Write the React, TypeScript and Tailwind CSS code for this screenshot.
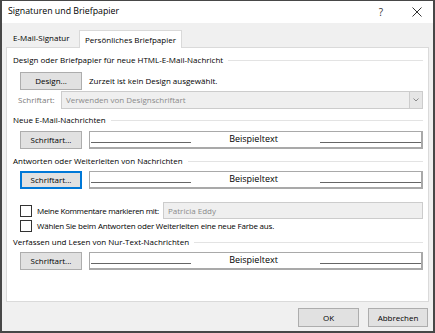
import React from "react";

function Header({ title }: { title: string }) {
  return (
    <div className="h-[14px] flex items-center gap-[5px]">
      <span className="whitespace-nowrap">{title}</span>
      <div className="flex-1 h-px bg-[#e3e3e3]" />
    </div>
  );
}

function Btn({ label, focused = false, className = "" }: { label: string; focused?: boolean; className?: string }) {
  return (
    <div
      className={
        "h-[18px] flex items-center justify-center whitespace-nowrap bg-[#e1e1e1] border " +
        (focused ? "border-[#0078d7] shadow-[inset_0_0_0_1px_#0078d7]" : "border-[#adadad]") +
        " " +
        className
      }
    >
      {label}
    </div>
  );
}

function Sample() {
  return (
    <div className="relative flex-1 h-[18px] bg-white border border-[#a9a9a9] border-r-2 border-b-2 flex items-center justify-center">
      <span className="text-[9px] -mt-[2px] ml-[-4px]">Beispieltext</span>
      <div className="absolute left-[1px] bottom-[4px] w-[100px] h-px bg-[#666]" />
      <div className="absolute right-0 bottom-[4px] w-[101px] h-px bg-[#666]" />
    </div>
  );
}

function Checkbox() {
  return <div className="w-[12px] h-[12px] border border-[#333] bg-white shrink-0" />;
}

export default function App() {
  return (
    <div className="w-[435px] h-[333px] flex flex-col bg-[#f0f0f0] border-x-2 border-b-2 border-t border-[#474747] font-['Open_Sans',sans-serif] text-[8px] text-black overflow-hidden whitespace-nowrap">
      {/* Title bar */}
      <div className="h-[22px] bg-white flex items-center pl-[6px] shrink-0">
        <span className="text-[8.8px]">Signaturen und Briefpapier</span>
        <div className="flex-1" />
        <span className="text-[10px] text-[#333] mr-[29px]">?</span>
        <svg width="10" height="10" viewBox="0 0 10 10" className="mr-[11px]">
          <path d="M0.5 0.5 L9.5 9.5 M9.5 0.5 L0.5 9.5" stroke="#333" strokeWidth="1" />
        </svg>
      </div>

      <div className="flex-1 flex flex-col px-[4px]">
        {/* Tabs */}
        <div className="h-[24px] flex items-end shrink-0">
          <div className="ml-[2px] w-[70px] h-[18px] flex items-center pl-[5px]">E-Mail-Signatur</div>
          <div className="relative top-px z-10 ml-px w-[103px] h-[18px] bg-white border-x border-t border-[#d9d9d9] flex items-center justify-center">
            Persönliches Briefpapier
          </div>
        </div>

        {/* Panel */}
        <div className="h-[255px] bg-white border border-[#dadada] pl-[6px] pr-[5px] pt-[5px] flex flex-col shrink-0">
          <Header title="Design oder Briefpapier für neue HTML-E-Mail-Nachricht" />
          <div className="mt-[5px] flex items-center">
            <Btn label="Design..." className="ml-[7px] w-[62px]" />
            <span className="ml-[7px]">Zurzeit ist kein Design ausgewählt.</span>
          </div>
          <div className="mt-[1px] flex items-center">
            <span className="ml-[5px] w-[43px] text-[#7a7a7a]">Schriftart:</span>
            <div className="flex-1 h-[18px] bg-[#efefef] border border-[#cccccc] flex items-center">
              <span className="pl-[4px] flex-1 text-[#8a8a8a]">Verwenden von Designschriftart</span>
              <div className="w-[13px] h-full border-l border-[#cccccc] bg-[#e6e6e6] flex items-center justify-center">
                <svg width="6" height="4" viewBox="0 0 6 4">
                  <path d="M0.5 0.5 L3 3 L5.5 0.5" stroke="#8a8a8a" strokeWidth="1" fill="none" />
                </svg>
              </div>
            </div>
          </div>

          <div className="mt-[4px]">
            <Header title="Neue E-Mail-Nachrichten" />
          </div>
          <div className="mt-[4px] flex items-center">
            <Btn label="Schriftart..." className="ml-[7px] w-[62px]" />
            <div className="ml-[7px] flex-1 flex">
              <Sample />
            </div>
          </div>

          <div className="mt-[5px]">
            <Header title="Antworten oder Weiterleiten von Nachrichten" />
          </div>
          <div className="mt-[3px] flex items-center">
            <Btn label="Schriftart..." focused className="ml-[7px] w-[62px]" />
            <div className="ml-[7px] flex-1 flex">
              <Sample />
            </div>
          </div>

          <div className="mt-[13px] h-[17px] flex items-center">
            <div className="ml-[7px]">
              <Checkbox />
            </div>
            <span className="ml-[5px] w-[126px] tracking-[-0.3px]">Meine Kommentare markieren mit:</span>
            <div className="flex-1 h-full bg-[#efefef] border border-[#cccccc] flex items-center pl-[4px] text-[#8a8a8a]">
              Patricia Eddy
            </div>
          </div>
          <div className="h-[14px] flex items-center">
            <div className="ml-[7px]">
              <Checkbox />
            </div>
            <span className="ml-[5px] tracking-[-0.2px]">Wählen Sie beim Antworten oder Weiterleiten eine neue Farbe aus.</span>
          </div>

          <div className="mt-[2px]">
            <Header title="Verfassen und Lesen von Nur-Text-Nachrichten" />
          </div>
          <div className="mt-[3px] flex items-center">
            <Btn label="Schriftart..." className="ml-[7px] w-[62px]" />
            <div className="ml-[7px] flex-1 flex">
              <Sample />
            </div>
          </div>
        </div>

        {/* Footer */}
        <div className="flex justify-end gap-[9px] pt-[6px] pr-px">
          <Btn label="OK" className="w-[61px] h-[19px]" />
          <Btn label="Abbrechen" className="w-[60px] h-[19px]" />
        </div>
      </div>
    </div>
  );
}
